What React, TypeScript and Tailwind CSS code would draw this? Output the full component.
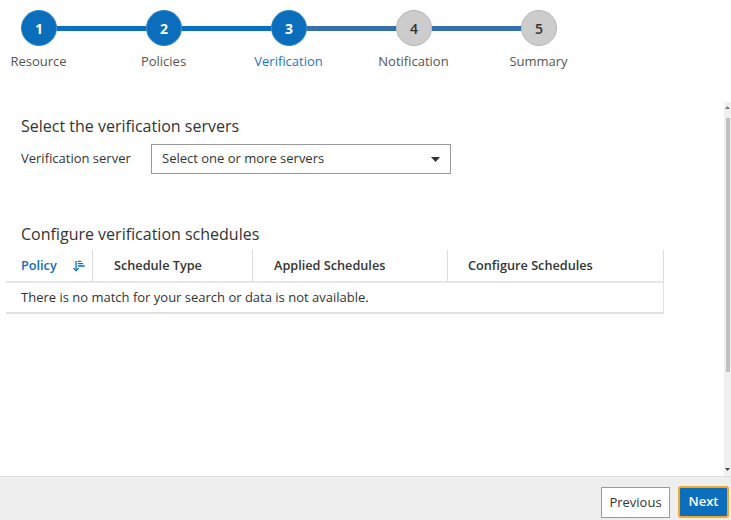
import React from "react";
import { ArrowDownNarrowWide } from "lucide-react";

const steps = [
  { n: 1, label: "Resource", state: "done" },
  { n: 2, label: "Policies", state: "done" },
  { n: 3, label: "Verification", state: "current" },
  { n: 4, label: "Notification", state: "todo" },
  { n: 5, label: "Summary", state: "todo" },
];

function Circle({ n, active }: { n: number; active: boolean }) {
  return active ? (
    <div className="flex h-[36px] w-[36px] shrink-0 items-center justify-center rounded-full border border-[#2f83c9] bg-[#0a6ebd] text-[14px] font-bold text-white">
      {n}
    </div>
  ) : (
    <div className="flex h-[36px] w-[36px] shrink-0 items-center justify-center rounded-full border border-[#b5b5b5] bg-[#cccccc] text-[14px] font-semibold text-[#333]">
      {n}
    </div>
  );
}

export default function App() {
  return (
    <div
      className="flex h-[520px] w-[731px] flex-col overflow-hidden bg-white text-[#333]"
      style={{ fontFamily: '"Open Sans", "Liberation Sans", sans-serif' }}
    >
      {/* Stepper */}
      <div className="h-[102px] shrink-0 pl-[21px] pt-[10px]">
        <div className="flex items-center">
          {steps.map((s, i) => (
            <React.Fragment key={s.n}>
              <Circle n={s.n} active={s.state !== "todo"} />
              {i < steps.length - 1 && (
                <div
                  className={
                    i < 2
                      ? "h-[5px] w-[89px] bg-[#0b6fc0]"
                      : "h-[5px] w-[89px] bg-[#3470ad]"
                  }
                />
              )}
            </React.Fragment>
          ))}
        </div>
        <div className="-ml-[45px] mt-[6px] flex">
          {steps.map((s) => (
            <div
              key={s.n}
              className={
                s.state === "current"
                  ? "w-[125px] text-center text-[13px] leading-[18px] text-[#1a78c2]"
                  : "w-[125px] text-center text-[13px] leading-[18px] text-[#555]"
              }
            >
              {s.label}
            </div>
          ))}
        </div>
      </div>

      {/* Scroll region */}
      <div className="flex min-h-0 flex-1">
        <div className="flex-1 pt-[13px]">
          <div className="pl-[21px] text-[16px] leading-[22px] text-[#333]">
            Select the verification servers
          </div>
          <div className="mt-[7px] flex items-center pl-[21px]">
            <div className="w-[130px] text-[13px] text-[#333]">Verification server</div>
            <div className="flex h-[30px] w-[300px] items-center justify-between border border-[#9a9a9a] bg-white pl-[10px] pr-[10px]">
              <span className="text-[13px] text-[#333]">Select one or more servers</span>
              <svg width="9" height="5" viewBox="0 0 9 5">
                <path d="M0 0h9L4.5 5z" fill="#333" />
              </svg>
            </div>
          </div>

          <div className="mt-[49px] pl-[21px] text-[16px] leading-[22px] text-[#333]">
            Configure verification schedules
          </div>

          <div className="ml-[6px] mt-[5px] w-[658px]">
            <div className="flex h-[33px] border-b-2 border-r border-[#e6e6e6] border-r-[#dcdcdc]">
              <div className="flex w-[87px] items-center border-r border-[#dcdcdc] pl-[15px]">
                <span className="text-[12.7px] font-semibold text-[#0a6ebd]">Policy</span>
                <ArrowDownNarrowWide className="ml-[15px] text-[#0a6ebd]" size={14} strokeWidth={2.2} />
              </div>
              <div className="flex w-[160px] items-center border-r border-[#dcdcdc] pl-[21px] text-[12.7px] font-semibold">
                Schedule Type
              </div>
              <div className="flex w-[195px] items-center border-r border-[#dcdcdc] pl-[21px] text-[12.7px] font-semibold">
                Applied Schedules
              </div>
              <div className="flex flex-1 items-center pl-[20px] text-[12.7px] font-semibold">
                Configure Schedules
              </div>
            </div>
            <div className="flex h-[31px] items-center border-b-2 border-r border-[#e0e0e0] pl-[15px] text-[13px] text-[#333]">
              There is no match for your search or data is not available.
            </div>
          </div>
        </div>

        {/* Scrollbar */}
        <div className="flex w-[7px] shrink-0 flex-col items-center bg-[#f0f0f0]">
          <div className="flex h-[16px] items-start justify-center pt-[4px]">
            <svg width="5" height="3" viewBox="0 0 5 3">
              <path d="M0 3L2.5 0L5 3z" fill="#777" />
            </svg>
          </div>
          <div className="h-[254px] w-[4px] bg-[#c1c1c1]" />
          <div className="flex-1" />
          <div className="flex h-[14px] items-end justify-center pb-[5px]">
            <svg width="5" height="3" viewBox="0 0 5 3">
              <path d="M0 0L2.5 3L5 0z" fill="#444" />
            </svg>
          </div>
        </div>
      </div>

      {/* Footer */}
      <div className="flex h-[44px] shrink-0 items-end justify-end gap-[8px] border-t border-[#dcdcdc] bg-[#eeeeee] pb-[2px] pr-[2px]">
        <button className="h-[31px] w-[69px] border border-[#9a9a9a] bg-white text-[13px] text-[#333]">
          Previous
        </button>
        <button className="h-[32px] w-[51px] rounded-[3px] border-[2px] border-[#f5a623] bg-[#0a6ebd] text-[13px] font-semibold text-white">
          Next
        </button>
      </div>
    </div>
  );
}
